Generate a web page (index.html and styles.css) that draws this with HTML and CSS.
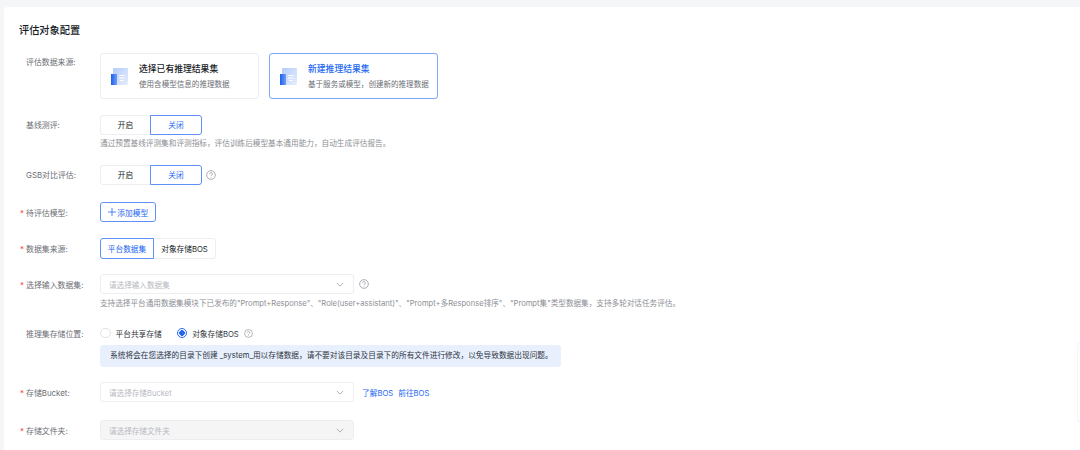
FILE: index.html
```html
<!DOCTYPE html>
<html lang="zh-CN">
<head>
  <meta charset="UTF-8">
  <title>评估对象配置</title>
  <link rel="stylesheet" href="styles.css">
</head>
<body>
  <svg class="svg-defs" width="0" height="0">
    <defs>
      <linearGradient id="sheet-fill" x1="0" y1="0" x2="1" y2="1">
        <stop offset="0" stop-color="#b4ccfa"/>
        <stop offset="1" stop-color="#e6eefd"/>
      </linearGradient>
      <linearGradient id="spine-fill" x1="0" y1="0" x2="1" y2="0">
        <stop offset="0" stop-color="#1c60f0"/>
        <stop offset="1" stop-color="#6f9cf6"/>
      </linearGradient>
      <symbol id="icon-dataset" viewBox="0 0 17 17">
        <rect x="2" y="0" width="15" height="17" rx="1" fill="url(#sheet-fill)"/>
        <rect x="0" y="6" width="6" height="11" fill="url(#spine-fill)"/>
        <path d="M8 7.5h5.5M8 10h5.5M9 12.5h3.5" stroke="#fff" stroke-width="1" fill="none"/>
      </symbol>
      <symbol id="icon-help" viewBox="0 0 12 12">
        <circle cx="6" cy="6" r="5.2" fill="none" stroke="#84868c" stroke-width=".8"/>
        <path d="M4.4 4.8a1.6 1.6 0 1 1 2.4 1.4c-.5.3-.8.6-.8 1.1" fill="none" stroke="#84868c" stroke-width=".8"/>
        <circle cx="6" cy="8.9" r=".5" fill="#84868c"/>
      </symbol>
      <symbol id="icon-chevron" viewBox="0 0 10 6">
        <path d="M1 1l4 4 4-4" fill="none" stroke="#84868c" stroke-width=".8"/>
      </symbol>
      <symbol id="icon-plus" viewBox="0 0 9 9">
        <path d="M4.5 0v9M0 4.5h9" fill="none" stroke="#2468f2" stroke-width=".9"/>
      </symbol>
    </defs>
  </svg>

  <main class="panel">
    <h1 class="panel-title">评估对象配置</h1>

    <div class="form-row row-source">
      <div class="form-label label-top">评估数据来源:</div>
      <div class="source-cards">
        <div class="source-card">
          <svg class="source-icon"><use href="#icon-dataset"/></svg>
          <div>
            <div class="source-name">选择已有推理结果集</div>
            <div class="source-desc">使用含模型信息的推理数据</div>
          </div>
        </div>
        <div class="source-card is-active">
          <svg class="source-icon"><use href="#icon-dataset"/></svg>
          <div>
            <div class="source-name">新建推理结果集</div>
            <div class="source-desc">基于服务或模型，创建新的推理数据</div>
          </div>
        </div>
      </div>
    </div>

    <div class="form-row row-baseline">
      <div class="form-label">基线测评:</div>
      <div class="form-field">
        <div class="toggle">
          <span class="toggle-item">开启</span>
          <span class="toggle-item is-active">关闭</span>
        </div>
      </div>
    </div>
    <div class="form-hint hint-baseline">通过预置基线评测集和评测指标，评估训练后模型基本通用能力，自动生成评估报告。</div>

    <div class="form-row row-gsb">
      <div class="form-label">GSB对比评估:</div>
      <div class="form-field">
        <div class="toggle">
          <span class="toggle-item">开启</span>
          <span class="toggle-item is-active">关闭</span>
        </div>
        <svg class="help-icon gsb-help"><use href="#icon-help"/></svg>
      </div>
    </div>

    <div class="form-row row-model">
      <div class="form-label is-required">待评估模型:</div>
      <div class="form-field">
        <button class="add-btn"><svg class="add-plus"><use href="#icon-plus"/></svg>添加模型</button>
      </div>
    </div>

    <div class="form-row row-origin">
      <div class="form-label is-required">数据集来源:</div>
      <div class="form-field">
        <div class="toggle">
          <span class="toggle-item seg-platform is-active">平台数据集</span>
          <span class="toggle-item seg-bos">对象存储BOS</span>
        </div>
      </div>
    </div>

    <div class="form-row row-input">
      <div class="form-label is-required">选择输入数据集:</div>
      <div class="form-field">
        <div class="select">
          <span>请选择输入数据集</span>
          <svg class="select-arrow"><use href="#icon-chevron"/></svg>
        </div>
        <svg class="help-icon input-help"><use href="#icon-help"/></svg>
      </div>
    </div>
    <div class="form-hint hint-input">支持选择平台通用数据集模块下已发布的"Prompt+Response"、"Role(user+assistant)"、"Prompt+多Response排序"、"Prompt集"类型数据集，支持多轮对话任务评估。</div>

    <div class="form-row row-storage">
      <div class="form-label">推理集存储位置:</div>
      <div class="form-field">
        <label class="radio"><span class="radio-dot"></span>平台共享存储</label>
        <label class="radio is-checked"><span class="radio-dot"></span>对象存储BOS</label>
        <svg class="help-icon storage-help"><use href="#icon-help"/></svg>
      </div>
    </div>
    <div class="notice">系统将会在您选择的目录下创建 _system_用以存储数据，请不要对该目录及目录下的所有文件进行修改，以免导致数据出现问题。</div>

    <div class="form-row row-bucket">
      <div class="form-label is-required">存储Bucket:</div>
      <div class="form-field">
        <div class="select">
          <span>请选择存储Bucket</span>
          <svg class="select-arrow"><use href="#icon-chevron"/></svg>
        </div>
        <a class="link link-first">了解BOS</a>
        <a class="link">前往BOS</a>
      </div>
    </div>

    <div class="form-row row-folder">
      <div class="form-label is-required">存储文件夹:</div>
      <div class="form-field">
        <div class="select is-disabled">
          <span>请选择存储文件夹</span>
          <svg class="select-arrow"><use href="#icon-chevron"/></svg>
        </div>
      </div>
    </div>
  </main>

  <div class="side-float"></div>
</body>
</html>
```

FILE: styles.css
```css
/**
 * Initializers.
 */
* {
  box-sizing: border-box;
  font-family: 'Inter', 'Noto Sans CJK SC', sans-serif;
}
html,
body {
  height: 100%;
}
body {
  margin: 0;
  padding: 7px 0 0 4px;
  overflow: hidden;
  position: relative;
  background-color: #f5f6f8;
  color: #151b26;
  font-size: 7.7px;
}
.svg-defs {
  position: absolute;
}

/**
 * Panel.
 */
.panel {
  height: 443px;
  padding: 16px 0 0 16px;
  background-color: #fff;
  border-top-left-radius: 4px;
}
.panel-title {
  margin: 0 0 16px -1px;
  height: 14px;
  line-height: 14px;
  font-size: 10.2px;
  font-weight: 500;
}

/**
 * Form rows.
 */
.form-row {
  display: flex;
  align-items: center;
}
.form-label {
  position: relative;
  flex: none;
  width: 80px;
  padding-left: 6px;
  color: #6b6e75;
  font-size: 7.9px;
}
.label-top {
  align-self: flex-start;
  padding-top: 3px;
}
.is-required::before {
  content: '*';
  position: absolute;
  left: 0;
  top: 1px;
  color: #f33e3e;
}
.form-field {
  display: flex;
  align-items: center;
}
.form-hint {
  margin-left: 80px;
  height: 12px;
  line-height: 12px;
  color: #8d8f95;
  font-size: 7.65px;
  white-space: nowrap;
}
.row-baseline { margin-top: 15.5px; }
.hint-baseline { margin-top: 3px; }
.row-gsb { margin-top: 14.5px; }
.row-model { margin-top: 17px; }
.row-origin { margin-top: 16px; }
.row-input { margin-top: 15.5px; }
.hint-input { margin-top: 4px; font-size: 7.62px; }
.row-storage { margin-top: 16px; height: 14px; }
.row-bucket { margin-top: 15px; }
.row-folder { margin-top: 18px; }

/**
 * Source cards.
 */
.source-cards {
  display: flex;
  gap: 10px;
}
.source-card {
  display: flex;
  align-items: center;
  width: 159px;
  height: 46px;
  padding-left: 9.5px;
  border: 1px solid #eceef1;
  border-radius: 3px;
}
.source-card.is-active {
  width: 169px;
  border-color: #7da6f7;
}
.source-icon {
  flex: none;
  width: 17px;
  height: 17px;
  margin-right: 11.5px;
}
.source-name {
  height: 13px;
  line-height: 13px;
  font-size: 8.8px;
  font-weight: 500;
}
.is-active .source-name {
  color: #2468f2;
}
.source-desc {
  margin-top: 4px;
  height: 11px;
  line-height: 11px;
  color: #6b6e75;
  font-size: 7.55px;
}

/**
 * Toggle groups.
 */
.toggle {
  display: flex;
  height: 20.5px;
}
.toggle-item {
  display: flex;
  align-items: center;
  justify-content: center;
  width: 50px;
  height: 100%;
  border: 1px solid #eceef1;
  font-size: 7.7px;
}
.toggle-item:first-child {
  border-radius: 3px 0 0 3px;
  border-right: none;
}
.toggle-item:last-child {
  width: 52px;
  border-radius: 0 3px 3px 0;
}
.toggle-item.is-active {
  border: 1px solid #5e90f5;
  color: #2468f2;
}
.seg-platform {
  width: 54px;
}
.seg-platform.is-active {
  border-radius: 3px 0 0 3px;
}
.toggle-item.seg-bos {
  width: 62px;
  border-left: none;
}

/**
 * Buttons, selects, links.
 */
.add-btn {
  display: flex;
  align-items: center;
  justify-content: center;
  width: 56px;
  height: 20px;
  padding: 0;
  color: #2468f2;
  background: #fff;
  border: 1px solid #5e90f5;
  border-radius: 3px;
  font-size: 7.7px;
}
.add-plus {
  width: 8px;
  height: 8px;
  margin-right: 1.5px;
}
.select {
  display: flex;
  align-items: center;
  justify-content: space-between;
  width: 254px;
  height: 20px;
  padding: 0 9px 0 8px;
  color: #b8babf;
  border: 1px solid #eceef1;
  border-radius: 3px;
  font-size: 7.6px;
}
.select.is-disabled {
  background-color: #f5f5f6;
}
.select-arrow {
  width: 8px;
  height: 5px;
}
.help-icon {
  flex: none;
  width: 10px;
  height: 10px;
}
.gsb-help { margin-left: 4px; }
.input-help { margin-left: 5px; }
.storage-help { margin-left: 5px; width: 9px; height: 9px; }
.link {
  color: #2468f2;
  font-size: 7.7px;
  margin-left: 5px;
}
.link-first {
  margin-left: 8px;
}

/**
 * Radios and notice.
 */
.radio {
  display: flex;
  align-items: center;
  margin-right: 15px;
  color: #303540;
  font-size: 7.7px;
}
.radio:last-of-type {
  margin-right: 0;
}
.radio-dot {
  width: 10.5px;
  height: 10.5px;
  margin-right: 5px;
  background: #fff;
  border: 1px solid #e0e2e5;
  border-radius: 50%;
}
.is-checked .radio-dot {
  border-color: #2468f2;
  background: radial-gradient(circle, #2468f2 0 2.6px, #fff 3px);
}
.notice {
  width: 461px;
  height: 22px;
  margin: 5px 0 0 80px;
  padding-left: 10px;
  line-height: 22px;
  color: #303540;
  background-color: #e8f0fe;
  border-radius: 3px;
  font-size: 7.7px;
  white-space: nowrap;
}

/**
 * Floating tab clipped by the right edge.
 */
.side-float {
  position: absolute;
  top: 343px;
  right: 0;
  width: 3px;
  height: 79px;
  border: 1px solid #f5f5f7;
  border-right: none;
  border-radius: 3px 0 0 3px;
}
```
